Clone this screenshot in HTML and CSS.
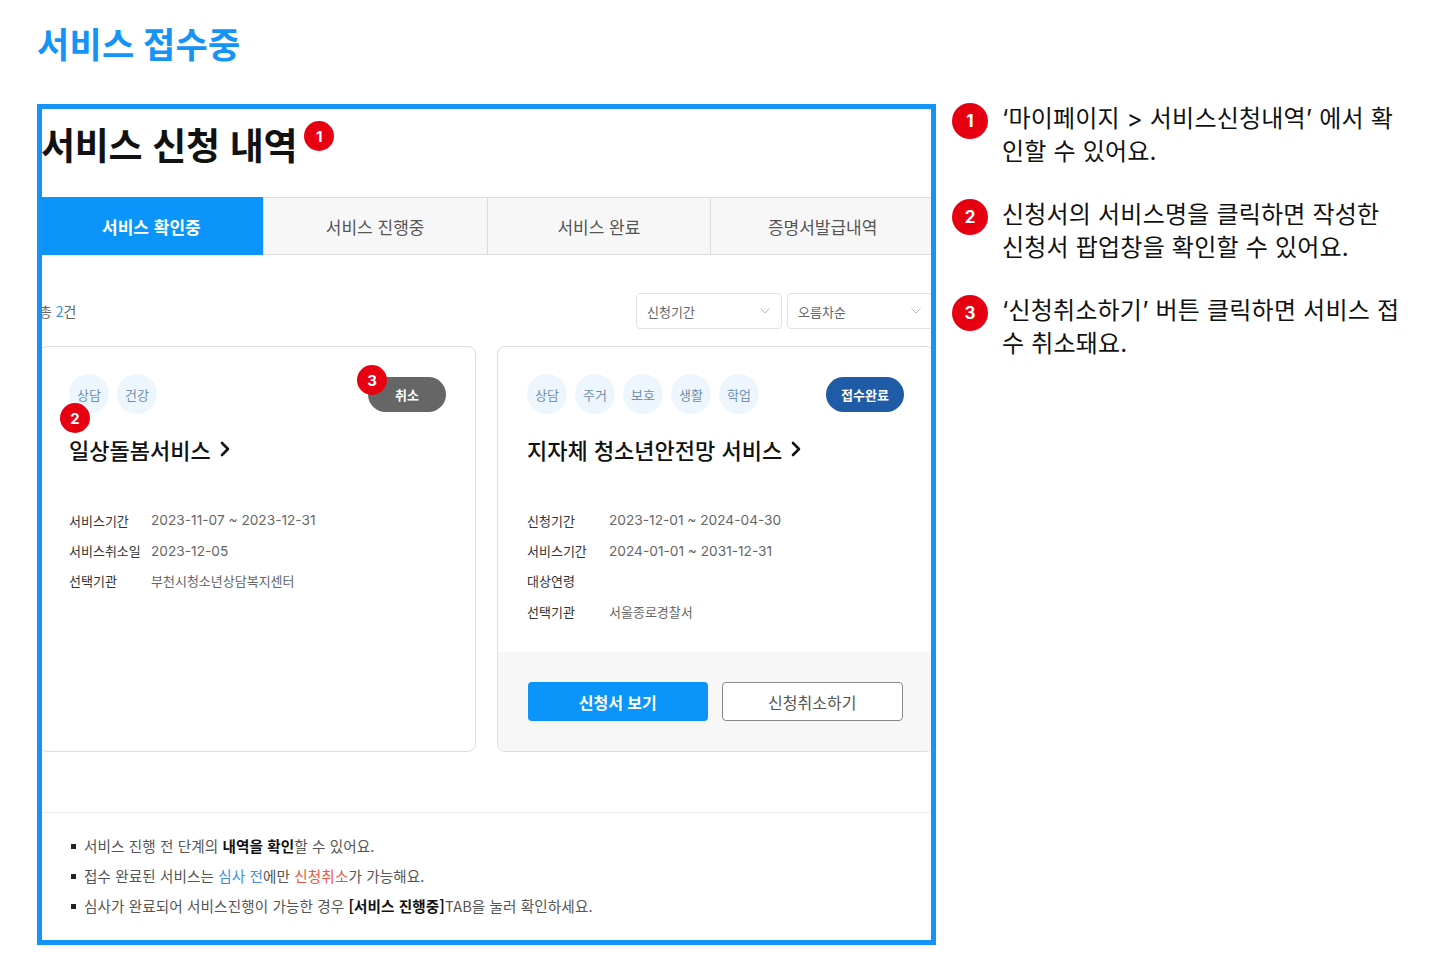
FILE: index.html
```html
<!DOCTYPE html>
<html lang="ko">
<head>
<meta charset="utf-8">
<title>서비스 접수중</title>
<link rel="stylesheet" href="styles.css">
</head>
<body>
<div class="page">
  <h1 class="page-title">서비스 접수중</h1>
  <div class="main">
    <div class="frame">
      <div class="screen">
        <div class="screen-head">
          <h2 class="screen-title">서비스 신청 내역</h2>
          <span class="badge">1</span>
        </div>

        <div class="tabs">
          <div class="tab active">서비스 확인중</div>
          <div class="tab">서비스 진행중</div>
          <div class="tab">서비스 완료</div>
          <div class="tab">증명서발급내역</div>
        </div>

        <div class="toolbar">
          <div class="count">총 <em>2</em>건</div>
          <div class="selects">
            <div class="select"><span>신청기간</span><svg class="caret" width="10" height="6" viewBox="0 0 10 6"><polyline points="0.5,0.5 5,5 9.5,0.5" fill="none" stroke="#bbb" stroke-width="1"/></svg></div>
            <div class="select"><span>오름차순</span><svg class="caret" width="10" height="6" viewBox="0 0 10 6"><polyline points="0.5,0.5 5,5 9.5,0.5" fill="none" stroke="#bbb" stroke-width="1"/></svg></div>
          </div>
        </div>

        <div class="cards">
          <div class="card">
            <div class="card-body">
              <div class="card-top">
                <div class="tags"><span class="tag">상담</span><span class="tag">건강</span></div>
                <span class="pill pill-gray">취소</span>
              </div>
              <div class="card-title">일상돌봄서비스 <svg class="chev" width="10" height="16" viewBox="0 0 10 16"><polyline points="2,2 8,8 2,14" fill="none" stroke="#111" stroke-width="2.6" stroke-linecap="round" stroke-linejoin="round"/></svg></div>
              <div class="info">
                <span class="label">서비스기간</span><span class="value">2023-11-07 ~ 2023-12-31</span>
                <span class="label">서비스취소일</span><span class="value">2023-12-05</span>
                <span class="label">선택기관</span><span class="value kr">부천시청소년상담복지센터</span>
              </div>
            </div>
            <span class="badge badge-2">2</span>
            <span class="badge badge-3">3</span>
          </div>

          <div class="card">
            <div class="card-body">
              <div class="card-top">
                <div class="tags"><span class="tag">상담</span><span class="tag">주거</span><span class="tag">보호</span><span class="tag">생활</span><span class="tag">학업</span></div>
                <span class="pill pill-blue">접수완료</span>
              </div>
              <div class="card-title">지자체 청소년안전망 서비스 <svg class="chev" width="10" height="16" viewBox="0 0 10 16"><polyline points="2,2 8,8 2,14" fill="none" stroke="#111" stroke-width="2.6" stroke-linecap="round" stroke-linejoin="round"/></svg></div>
              <div class="info">
                <span class="label">신청기간</span><span class="value">2023-12-01 ~ 2024-04-30</span>
                <span class="label">서비스기간</span><span class="value">2024-01-01 ~ 2031-12-31</span>
                <span class="label">대상연령</span><span class="value"></span>
                <span class="label">선택기관</span><span class="value kr">서울종로경찰서</span>
              </div>
            </div>
            <div class="card-foot">
              <div class="btn btn-primary">신청서 보기</div>
              <div class="btn btn-line">신청취소하기</div>
            </div>
          </div>
        </div>

        <div class="notice">
          <ul>
            <li>서비스 진행 전 단계의 <b>내역을 확인</b>할 수 있어요.</li>
            <li>접수 완료된 서비스는 <span class="c-blue">심사 전</span>에만 <span class="c-red">신청취소</span>가 가능해요.</li>
            <li>심사가 완료되어 서비스진행이 가능한 경우 <b>[서비스 진행중]</b>TAB을 눌러 확인하세요.</li>
          </ul>
        </div>
      </div>
    </div>

    <div class="notes">
      <div class="note">
        <span class="num">1</span>
        <p>‘마이페이지 &gt; 서비스신청내역’ 에서 확<br>인할 수 있어요.</p>
      </div>
      <div class="note">
        <span class="num">2</span>
        <p>신청서의 서비스명을 클릭하면 작성한<br>신청서 팝업창을 확인할 수 있어요.</p>
      </div>
      <div class="note">
        <span class="num">3</span>
        <p>‘신청취소하기’ 버튼 클릭하면 서비스 접<br>수 취소돼요.</p>
      </div>
    </div>
  </div>
</div>
</body>
</html>
```

FILE: styles.css
```css
* {
  box-sizing: border-box;
  margin: 0;
  padding: 0;
}

body {
  font-family: "Inter", "Noto Sans CJK KR", sans-serif;
  background: #fff;
  color: #111;
}

.page {
  padding: 20px 0 0 37px;
}

.page-title {
  font-size: 35px;
  line-height: 50px;
  font-weight: 700;
  color: #1593f7;
  letter-spacing: 0.3px;
  margin-bottom: 34px;
}

.main {
  display: flex;
  align-items: flex-start;
}

/* ---------- framed screenshot ---------- */
.frame {
  flex: none;
  width: 899px;
  height: 841px;
  border: 5px solid #1593f7;
  overflow: hidden;
}

.screen {
  width: 895px;
  margin-left: -3px;
  font-family: "Noto Sans CJK KR", sans-serif;
}

.screen-head {
  height: 88px;
  padding-top: 12px;
  display: flex;
  align-items: flex-start;
}

.screen-title {
  font-size: 37px;
  line-height: 46px;
  font-weight: 700;
  color: #111;
  letter-spacing: -0.3px;
  margin-left: 2px;
}

.badge {
  width: 30px;
  height: 30px;
  border-radius: 50%;
  background: #e60012;
  color: #fff;
  font-family: "Inter", sans-serif;
  font-size: 15px;
  font-weight: 700;
  display: flex;
  align-items: center;
  justify-content: center;
  margin-left: 7px;
}

.tabs {
  display: grid;
  grid-template-columns: repeat(4, 1fr);
  height: 58px;
}

.tab {
  display: flex;
  align-items: center;
  justify-content: center;
  background: #f7f7f7;
  border-top: 1px solid #ddd;
  border-bottom: 1px solid #ddd;
  border-left: 1px solid #ddd;
  font-size: 17px;
  color: #555;
}

.tab.active {
  background: #0b95fb;
  border-color: #0b95fb;
  color: #fff;
  font-weight: 700;
}

.toolbar {
  margin-top: 38px;
  height: 36px;
  display: flex;
  align-items: center;
  justify-content: space-between;
}

.count {
  font-size: 14px;
  color: #666;
}

.count em {
  font-style: normal;
  color: #3b8ee0;
}

.selects {
  display: flex;
  gap: 5px;
  margin-right: 1px;
}

.select {
  width: 146px;
  height: 36px;
  border: 1px solid #e3e3e3;
  border-radius: 4px;
  padding: 0 11px 0 10px;
  display: flex;
  align-items: center;
  justify-content: space-between;
  font-size: 13px;
  color: #666;
}

/* ---------- cards ---------- */
.cards {
  margin-top: 17px;
  height: 406px;
  display: grid;
  grid-template-columns: 1fr 1fr;
  gap: 21px;
}

.card {
  position: relative;
  border: 1px solid #ddd;
  border-radius: 8px;
  overflow: hidden;
  display: flex;
  flex-direction: column;
}

.card-body {
  padding: 27px 29px 0;
}

.card-top {
  height: 40px;
  display: flex;
  align-items: center;
  justify-content: space-between;
}

.tags {
  display: flex;
  gap: 8px;
}

.tag {
  width: 40px;
  height: 40px;
  border-radius: 50%;
  background: #eef6fd;
  color: #6f8fb0;
  font-size: 13px;
  display: flex;
  align-items: center;
  justify-content: center;
}

.pill {
  width: 78px;
  height: 35px;
  border-radius: 18px;
  display: flex;
  align-items: center;
  justify-content: center;
  font-size: 13px;
  font-weight: 700;
  color: #fff;
}

.pill-gray {
  background: #666;
}

.pill-blue {
  background: #1f5ba7;
}

.card-title {
  margin-top: 20px;
  font-size: 22px;
  line-height: 30px;
  font-weight: 500;
  color: #111;
  display: flex;
  align-items: center;
  gap: 9px;
}

.info {
  margin-top: 41px;
  display: grid;
  grid-template-columns: 82px 1fr;
  grid-auto-rows: 30.4px;
  align-items: center;
}

.label {
  font-size: 13px;
  color: #333;
}

.value {
  font-family: "Inter", "Noto Sans CJK KR", sans-serif;
  font-size: 13.7px;
  color: #666;
}

.value.kr {
  font-family: "Noto Sans CJK KR", sans-serif;
  font-size: 13px;
}

.badge-2 {
  position: absolute;
  left: 20px;
  top: 56px;
  margin: 0;
}

.badge-3 {
  position: absolute;
  left: 317px;
  top: 18px;
  margin: 0;
}

.card-foot {
  margin-top: auto;
  height: 99px;
  padding: 30px 30px 0;
  background: #f7f7f7;
  display: flex;
  gap: 14px;
}

.btn {
  flex: 1;
  height: 39px;
  border-radius: 4px;
  display: flex;
  align-items: center;
  justify-content: center;
  font-size: 16px;
}

.btn-primary {
  background: #0b95fb;
  color: #fff;
  font-weight: 700;
}

.btn-line {
  background: #fff;
  border: 1px solid #888;
  color: #555;
}

/* ---------- notice ---------- */
.notice {
  margin-top: 60px;
  border-top: 1px solid #eee;
  padding-top: 18px;
}

.notice li {
  list-style: none;
  position: relative;
  padding-left: 45px;
  font-size: 14.6px;
  line-height: 30px;
  color: #555;
  letter-spacing: 0.1px;
}

.notice li::before {
  content: "";
  position: absolute;
  left: 32px;
  top: 13px;
  width: 5px;
  height: 5px;
  background: #222;
}

.notice b {
  color: #111;
  font-weight: 700;
}

.c-blue {
  color: #3c8fde;
}

.c-red {
  color: #e9573f;
}

/* ---------- side notes ---------- */
.notes {
  margin-left: 16px;
  margin-top: -2px;
}

.note {
  display: flex;
  align-items: flex-start;
  gap: 14px;
  margin-bottom: 30px;
}

.num {
  flex: none;
  width: 36px;
  height: 36px;
  margin-top: 1px;
  border-radius: 50%;
  background: #e60012;
  color: #fff;
  font-size: 17px;
  font-weight: 700;
  display: flex;
  align-items: center;
  justify-content: center;
}

.note p {
  font-size: 24px;
  line-height: 33px;
  letter-spacing: 0.2px;
  color: #111;
  white-space: nowrap;
}
```
